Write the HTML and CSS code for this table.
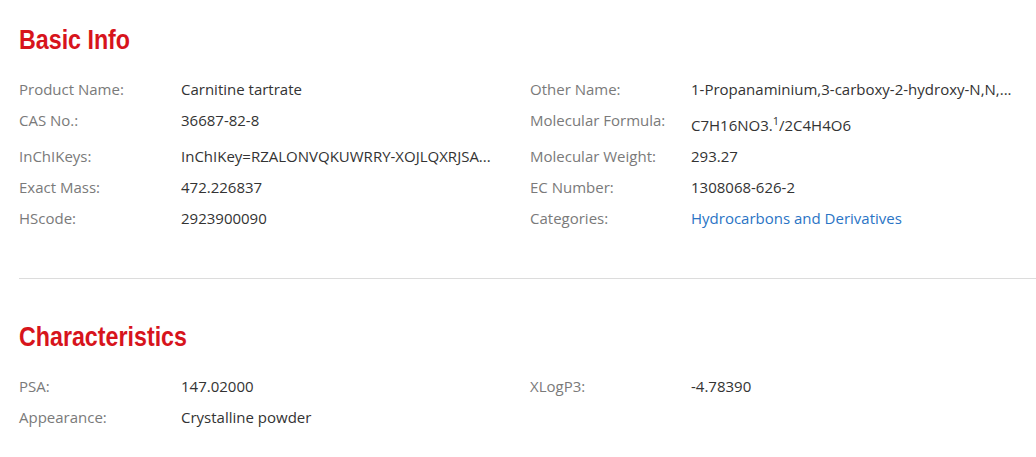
FILE: index.html
```html
<!DOCTYPE html>
<html>
<head>
<meta charset="utf-8">
<link rel="stylesheet" href="styles.css">
</head>
<body>
<div class="page">
  <section class="block block-first">
    <h2 class="title"><span class="title-text">Basic Info</span></h2>
    <div class="grid">
      <div class="label">Product Name:</div>
      <div class="value">Carnitine tartrate</div>
      <div class="label">Other Name:</div>
      <div class="value">1-Propanaminium,3-carboxy-2-hydroxy-N,N,...</div>

      <div class="label">CAS No.:</div>
      <div class="value">36687-82-8</div>
      <div class="label">Molecular Formula:</div>
      <div class="value">C7H16NO3.<sup>1</sup>/2C4H4O6</div>

      <div class="label">InChIKeys:</div>
      <div class="value">InChIKey=RZALONVQKUWRRY-XOJLQXRJSA...</div>
      <div class="label">Molecular Weight:</div>
      <div class="value">293.27</div>

      <div class="label">Exact Mass:</div>
      <div class="value">472.226837</div>
      <div class="label">EC Number:</div>
      <div class="value">1308068-626-2</div>

      <div class="label">HScode:</div>
      <div class="value">2923900090</div>
      <div class="label">Categories:</div>
      <div class="value"><a class="link" href="#">Hydrocarbons and Derivatives</a></div>
    </div>
  </section>
  <section class="block">
    <h2 class="title"><span class="title-text">Characteristics</span></h2>
    <div class="grid">
      <div class="label">PSA:</div>
      <div class="value">147.02000</div>
      <div class="label">XLogP3:</div>
      <div class="value">-4.78390</div>

      <div class="label">Appearance:</div>
      <div class="value">Crystalline powder</div>
    </div>
  </section>
</div>
</body>
</html>
```

FILE: styles.css
```css
html, body {
  margin: 0;
  padding: 0;
  background: #ffffff;
}

body {
  font-family: "Open Sans", "Noto Sans", sans-serif;
  font-size: 15px;
  color: #333333;
}

.page {
  padding-left: 19px;
  padding-top: 23px;
}

.block-first {
  padding-bottom: 49px;
  border-bottom: 1px solid #dcdcdc;
  margin-bottom: 41px;
}

.title {
  margin: 0 0 22px 0;
  font-family: "Liberation Sans", Arial, sans-serif;
  font-weight: bold;
  font-size: 28px;
  line-height: 34px;
  color: #d7141c;
}

.title-text {
  display: inline-block;
  transform: scaleX(0.83);
  transform-origin: left center;
}

.grid {
  display: grid;
  grid-template-columns: 162px 349px 161px 345px;
  row-gap: 10px;
  align-items: start;
  line-height: 21px;
}

.label {
  color: #7a7a7a;
  white-space: nowrap;
}

.value {
  color: #333333;
  white-space: nowrap;
}

.value sup {
  font-size: 11px;
}

.link {
  color: #2a74c5;
  text-decoration: none;
}
```
